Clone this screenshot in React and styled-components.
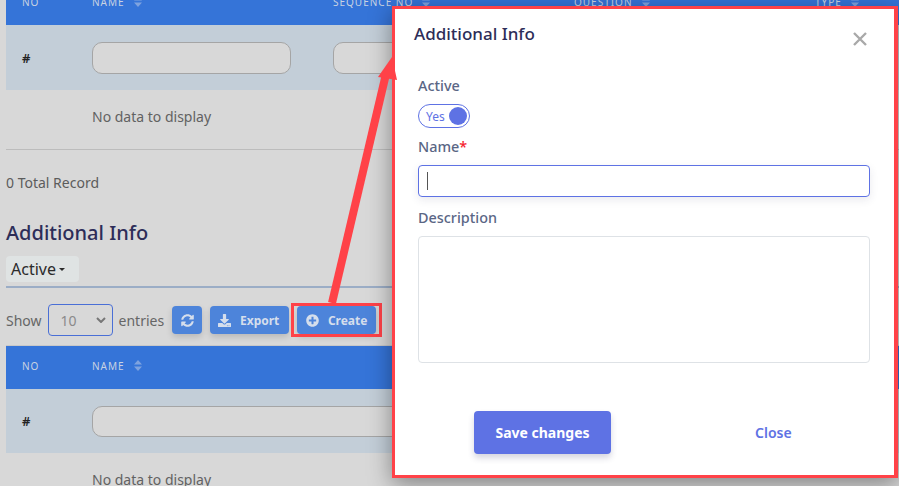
import React from "react";
import styled, { createGlobalStyle } from "styled-components";
import { FaSyncAlt, FaDownload, FaPlusCircle } from "react-icons/fa";

const Global = createGlobalStyle`
  html, body { margin: 0; padding: 0; height: 100%; overflow: hidden; background: #d8d8d8; }
  * { box-sizing: border-box; }
  body { font-family: "Noto Sans", "Open Sans", sans-serif; }
`;

const Page = styled.div`
  width: 899px;
  height: 486px;
  overflow: hidden;
  position: relative;
  background: #d8d8d8;
  color: #5a5a5a;
`;
const Content = styled.div`
  margin-top: -18px;
  padding-left: 6px;
  display: flex;
  flex-direction: column;
`;
const HeadRow = styled.div`
  display: grid;
  grid-template-columns: 86px repeat(4, 241px);
  height: 43px;
  padding-bottom: 4px;
  align-items: center;
  background: #3574d8;
  width: 893px;
`;
const HeadCell = styled.div`
  display: flex;
  align-items: center;
  gap: 9px;
  font-size: 10px;
  letter-spacing: 1px;
  color: #c9d3e2;
  padding-left: ${p => (p.$first ? "16px" : "0")};
`;
const Sort = styled.svg`
  width: 8px;
  height: 11px;
  fill: #7fa3df;
`;
const FilterRow = styled.div`
  display: grid;
  grid-template-columns: 86px repeat(4, 241px);
  height: ${p => p.$h}px;
  align-items: center;
  background: #c3ced8;
  width: 893px;
`;
const Hash = styled.div`
  font-size: 13px;
  font-weight: 600;
  color: #222;
  padding-left: 16px;
`;
const FilterInput = styled.div`
  height: ${p => p.$h}px;
  width: ${p => p.$w}px;
  background: #d8d8d8;
  border: 1px solid #a5a5a5;
  border-radius: 10px;
`;
const Empty = styled.div`
  height: ${p => p.$h}px;
  padding: 0 0 ${p => p.$pb}px 86px;
  display: flex;
  align-items: center;
  font-size: 14px;
  color: #626262;
`;
const Rule = styled.div`
  height: 1px;
  width: 893px;
  background: #bcbcbc;
`;
const Total = styled.div`
  margin-top: 23px;
  height: 20px;
  line-height: 20px;
  font-size: 14px;
  color: #5c5c5c;
`;
const Heading = styled.h2`
  margin: 25px 0 0;
  height: 30px;
  line-height: 30px;
  font-size: 20px;
  font-weight: 500;
  color: #2d2d58;
`;
const TabBar = styled.div`
  margin-top: 8px;
  height: 32px;
  width: 893px;
  border-bottom: 2px solid #9badc6;
`;
const Tab = styled.div`
  width: 73px;
  height: 26px;
  display: flex;
  align-items: center;
  gap: 3px;
  padding-left: 5px;
  background: #dfe3e3;
  border-radius: 4px;
  font-size: 16px;
  color: #2b2b2b;
`;
const Caret = styled.span`
  width: 0;
  height: 0;
  border-left: 3.5px solid transparent;
  border-right: 3.5px solid transparent;
  border-top: 3.5px solid #2b2b2b;
`;
const Toolbar = styled.div`
  margin-top: 16px;
  height: 32px;
  display: flex;
  align-items: center;
  font-size: 14px;
  color: #666;
`;
const Select = styled.div`
  width: 65px;
  height: 32px;
  margin: 0 6px;
  padding: 0 6px 0 12px;
  display: flex;
  align-items: center;
  justify-content: space-between;
  border: 1px solid #4a6fd6;
  border-radius: 4px;
  color: #8a8a8a;
`;
const Btn = styled.div`
  height: 28px;
  width: ${p => p.$w}px;
  margin-left: ${p => p.$ml}px;
  padding-right: ${p => p.$pr || 0}px;
  display: flex;
  align-items: center;
  justify-content: center;
  gap: 9px;
  background: #4d84da;
  border-radius: 4px;
  color: #d5deec;
  font-size: 12px;
  font-weight: 700;
  box-shadow: 0 3px 6px rgba(0, 0, 0, 0.15);
  position: relative;
  svg { font-size: 13px; }
`;
const Highlight = styled.div`
  position: absolute;
  inset: -3px -6px -3px -6px;
  border: 3px solid #ff4248;
`;
const SecondHead = styled(HeadRow)`
  margin-top: 10px;
  box-shadow: 0 -1px 0 #c8c8c8;
`;

const Modal = styled.div`
  position: absolute;
  left: 392px;
  top: 6px;
  width: 506px;
  height: 472px;
  background: #fff;
  border: 3px solid #ff4248;
  border-right-width: 4px;
  box-shadow: 0 6px 22px rgba(0, 0, 0, 0.4);
  display: flex;
  flex-direction: column;
  padding: 0 24px 0 23px;
`;
const ModalHeader = styled.div`
  height: 48px;
  margin-left: -4px;
  padding-top: 11px;
  display: flex;
  justify-content: space-between;
  align-items: flex-start;
`;
const ModalTitle = styled.div`
  font-size: 17px;
  font-weight: 500;
  line-height: 28px;
  color: #2d2d58;
`;
const CloseX = styled.svg`
  width: 14px;
  height: 14px;
  margin: 12px 3px 0 0;
  stroke: #a9a9a9;
  stroke-width: 2.4;
`;
const Label = styled.div`
  font-size: 14.4px;
  font-weight: 500;
  line-height: 20px;
  color: #5a6685;
  margin-top: ${p => p.$mt || 0}px;
`;
const Req = styled.span`
  color: #f5222d;
`;
const Toggle = styled.div`
  margin-top: 8px;
  width: 52px;
  height: 24px;
  border: 1px solid #5e72e4;
  border-radius: 12px;
  display: flex;
  align-items: center;
  justify-content: space-between;
  padding: 0 1px 0 7px;
  font-size: 12px;
  color: #5e72e4;
`;
const Knob = styled.span`
  width: 18px;
  height: 18px;
  margin-right: 1px;
  border-radius: 50%;
  background: #5e72e4;
`;
const NameInput = styled.div`
  margin-top: 8px;
  height: 32px;
  border: 1px solid #5e72e4;
  border-radius: 4px;
  box-shadow: 0 3px 9px rgba(50, 50, 93, 0.1);
  display: flex;
  align-items: center;
  padding-left: 8px;
`;
const CaretBar = styled.span`
  width: 1px;
  height: 18px;
  background: #555;
`;
const TextArea = styled.div`
  margin-top: 8px;
  height: 127px;
  border: 1px solid #dee2e6;
  border-radius: 4px;
`;
const Footer = styled.div`
  margin-top: 48px;
  display: flex;
  align-items: center;
`;
const SaveBtn = styled.div`
  margin-left: 56px;
  width: 137px;
  height: 43px;
  display: flex;
  align-items: center;
  justify-content: center;
  background: #5e72e4;
  color: #fff;
  font-size: 14px;
  font-weight: 700;
  border-radius: 4px;
  box-shadow: 0 4px 6px rgba(50, 50, 93, 0.2);
`;
const CloseBtn = styled.div`
  margin-left: 144px;
  font-size: 14px;
  font-weight: 600;
  color: #5e72e4;
`;
const Arrow = styled.svg`
  position: absolute;
  left: 0;
  top: 0;
  width: 899px;
  height: 486px;
  pointer-events: none;
`;

const SortIcon = () => (
  <Sort viewBox="0 0 8 11">
    <path d="M4 0 8 4.5H0Z M4 11 0 6.5H8Z" />
  </Sort>
);

export default function App() {
  return (
    <Page>
      <Global />
      <Content>
        <HeadRow>
          <HeadCell $first>NO</HeadCell>
          <HeadCell>NAME <SortIcon /></HeadCell>
          <HeadCell>SEQUENCE NO <SortIcon /></HeadCell>
          <HeadCell>QUESTION <SortIcon /></HeadCell>
          <HeadCell>TYPE <SortIcon /></HeadCell>
        </HeadRow>
        <FilterRow $h={65}>
          <Hash>#</Hash>
          <FilterInput $w={199} $h={32} />
          <FilterInput $w={199} $h={32} />
        </FilterRow>
        <Empty $h={59} $pb={7}>No data to display</Empty>
        <Rule />
        <Total>0 Total Record</Total>
        <Heading>Additional Info</Heading>
        <TabBar>
          <Tab>Active<Caret /></Tab>
        </TabBar>
        <Toolbar>
          Show
          <Select>
            10
            <svg width="10" height="6" viewBox="0 0 10 6" fill="none" stroke="#777" strokeWidth="2"><path d="M1 1l4 4 4-4" /></svg>
          </Select>
          entries
          <Btn $w={30} $ml={8}><FaSyncAlt /></Btn>
          <Btn $w={79} $ml={8} $pr={2}><FaDownload />Export</Btn>
          <Btn $w={79} $ml={8}><FaPlusCircle />Create<Highlight /></Btn>
        </Toolbar>
        <SecondHead>
          <HeadCell $first>NO</HeadCell>
          <HeadCell>NAME <SortIcon /></HeadCell>
        </SecondHead>
        <FilterRow $h={64}>
          <Hash>#</Hash>
          <FilterInput $w={500} $h={31} />
        </FilterRow>
        <Empty $h={59} $pb={7}>No data to display</Empty>
      </Content>

      <Modal>
        <ModalHeader>
          <ModalTitle>Additional Info</ModalTitle>
          <CloseX viewBox="0 0 14 14"><path d="M1 1l12 12M13 1L1 13" /></CloseX>
        </ModalHeader>
        <Label $mt={19}>Active</Label>
        <Toggle>Yes<Knob /></Toggle>
        <Label $mt={9}>Name<Req>*</Req></Label>
        <NameInput><CaretBar /></NameInput>
        <Label $mt={11}>Description</Label>
        <TextArea />
        <Footer>
          <SaveBtn>Save changes</SaveBtn>
          <CloseBtn>Close</CloseBtn>
        </Footer>
      </Modal>

      <Arrow viewBox="0 0 899 486">
        <path d="M332 303 386 74" stroke="#ff4248" strokeWidth="8" fill="none" />
        <path d="M392 57 378 77 397 80Z" fill="#ff4248" />
      </Arrow>
    </Page>
  );
}
